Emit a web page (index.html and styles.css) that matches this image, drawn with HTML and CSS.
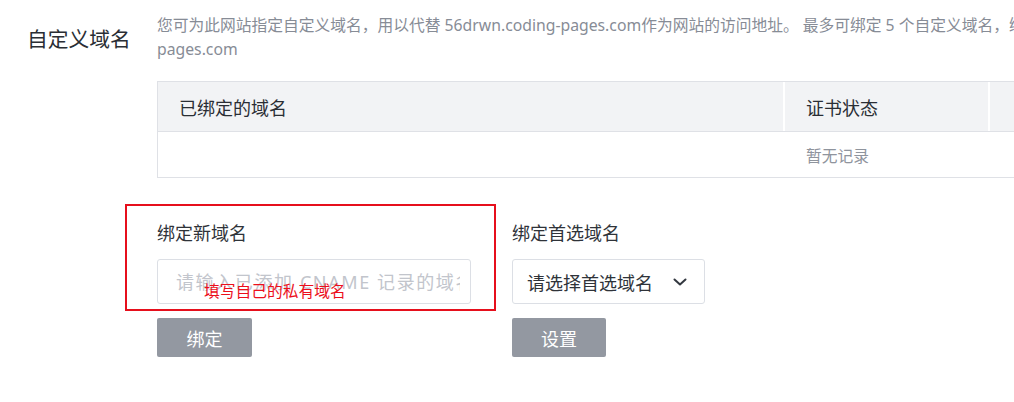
FILE: index.html
```html
<!DOCTYPE html>
<html lang="zh-CN">
<head>
<meta charset="utf-8">
<title>自定义域名</title>
<link rel="stylesheet" href="styles.css">
</head>
<body>
<div class="page">
  <section class="section">
    <h2 class="section-title">自定义域名</h2>
    <div class="section-body">
      <p class="desc">您可为此网站指定自定义域名，用以代替 56drwn.coding-pages.com作为网站的访问地址。 最多可绑定 5 个自定义域名，绑定后可通过自定义域名访问 56drwn.coding-<br>pages.com</p>

      <div class="table">
        <div class="tr thead">
          <div class="td col-domain">已绑定的域名</div>
          <div class="td col-cert">证书状态</div>
          <div class="td col-rest"></div>
        </div>
        <div class="tr tbody">
          <div class="td col-domain"></div>
          <div class="td col-cert empty">暂无记录</div>
          <div class="td col-rest"></div>
        </div>
      </div>

      <div class="forms">
        <div class="annotation-box"></div>
        <div class="form-group">
          <label class="form-label">绑定新域名</label>
          <div class="field">
            <input class="input" type="text" placeholder="请输入已添加 CNAME 记录的域名">
            <span class="annotation-note">填写自己的私有域名</span>
          </div>
          <button class="btn btn-bind">绑定</button>
        </div>
        <div class="form-group">
          <label class="form-label">绑定首选域名</label>
          <div class="select">
            <span class="select-text">请选择首选域名</span>
            <svg class="chevron" width="14" height="8" viewBox="0 0 14 8"><polyline points="1.5,1.5 7,6.5 12.5,1.5" fill="none" stroke="#333840" stroke-width="2" stroke-linecap="round" stroke-linejoin="round"/></svg>
          </div>
          <button class="btn btn-set">设置</button>
        </div>
      </div>
    </div>
  </section>
</div>
</body>
</html>
```

FILE: styles.css
```css
html, body {
  margin: 0;
  padding: 0;
  background: #ffffff;
}

body {
  font-family: "Noto Sans", "Noto Sans CJK SC", sans-serif;
  color: #2f3339;
  overflow: hidden;
  width: 1014px;
  height: 402px;
}

.page {
  width: 1400px;
}

.section {
  display: flex;
  padding-top: 13px;
}

.section-title {
  margin: 11px 0 0 0;
  padding-left: 27px;
  width: 130px;
  font-size: 20.75px;
  line-height: 30px;
  font-weight: 400;
  color: #2a2e34;
}

.section-body {
  flex: 1;
}

.desc {
  margin: 0;
  white-space: nowrap;
  font-size: 15.75px;
  line-height: 24px;
  color: #878c96;
}

.table {
  margin-top: 20px;
  border: 1px solid #dfe1e6;
  width: 1100px;
}

.tr {
  display: flex;
}

.thead {
  height: 49px;
  background: #f2f3f5;
  border-bottom: 1px solid #dfe1e6;
}

.tbody {
  height: 45px;
}

.td {
  display: flex;
  align-items: center;
  padding-left: 21px;
  box-sizing: border-box;
}

.thead .td {
  font-size: 18px;
  color: #2a2e34;
}

.col-domain {
  width: 627px;
}

.col-cert {
  width: 203px;
}

.thead .col-cert,
.thead .col-rest {
  border-left: 2px solid #ffffff;
}

.thead .col-cert {
  width: 205px;
  margin-left: -2px;
}

.col-rest {
  flex: 1;
}

.empty {
  font-size: 15.75px;
  color: #8f949d;
  padding-top: 1px;
}

.forms {
  position: relative;
  display: flex;
  gap: 41px;
  margin-top: 42px;
}

.annotation-box {
  position: absolute;
  left: -32px;
  top: -16px;
  width: 371px;
  height: 107px;
  box-sizing: border-box;
  border: 2px solid #e60f1c;
  pointer-events: none;
}

.form-group {
  display: flex;
  flex-direction: column;
  align-items: flex-start;
}

.form-label {
  font-size: 18px;
  line-height: 26px;
  color: #2f3339;
}

.field {
  position: relative;
  margin-top: 13px;
}

.input {
  display: block;
  width: 314px;
  height: 45px;
  box-sizing: border-box;
  border: 1px solid #dcdfe5;
  border-radius: 3px;
  padding: 0 10px 0 18px;
  font-family: inherit;
  font-size: 18px;
  color: #2f3339;
  background: #ffffff;
  outline: none;
}

.input::placeholder {
  color: #c2c5cc;
  letter-spacing: 1.6px;
}

.annotation-note {
  position: absolute;
  left: 47px;
  top: 21px;
  font-size: 15.75px;
  line-height: 22px;
  color: #ec0f1b;
  pointer-events: none;
}

.select {
  margin-top: 13px;
  width: 193px;
  height: 45px;
  box-sizing: border-box;
  border: 1px solid #dcdfe5;
  border-radius: 3px;
  display: flex;
  align-items: center;
  justify-content: space-between;
  padding: 0 17px 0 14px;
  font-size: 18px;
  color: #2f3339;
}

.chevron {
  display: block;
}

.btn {
  margin-top: 14px;
  height: 39px;
  border: none;
  border-radius: 2px;
  background: #9398a1;
  color: #ffffff;
  font-family: inherit;
  font-size: 18px;
  padding: 0;
  cursor: pointer;
}

.btn-bind {
  width: 95px;
}

.btn-set {
  width: 94px;
}
```
